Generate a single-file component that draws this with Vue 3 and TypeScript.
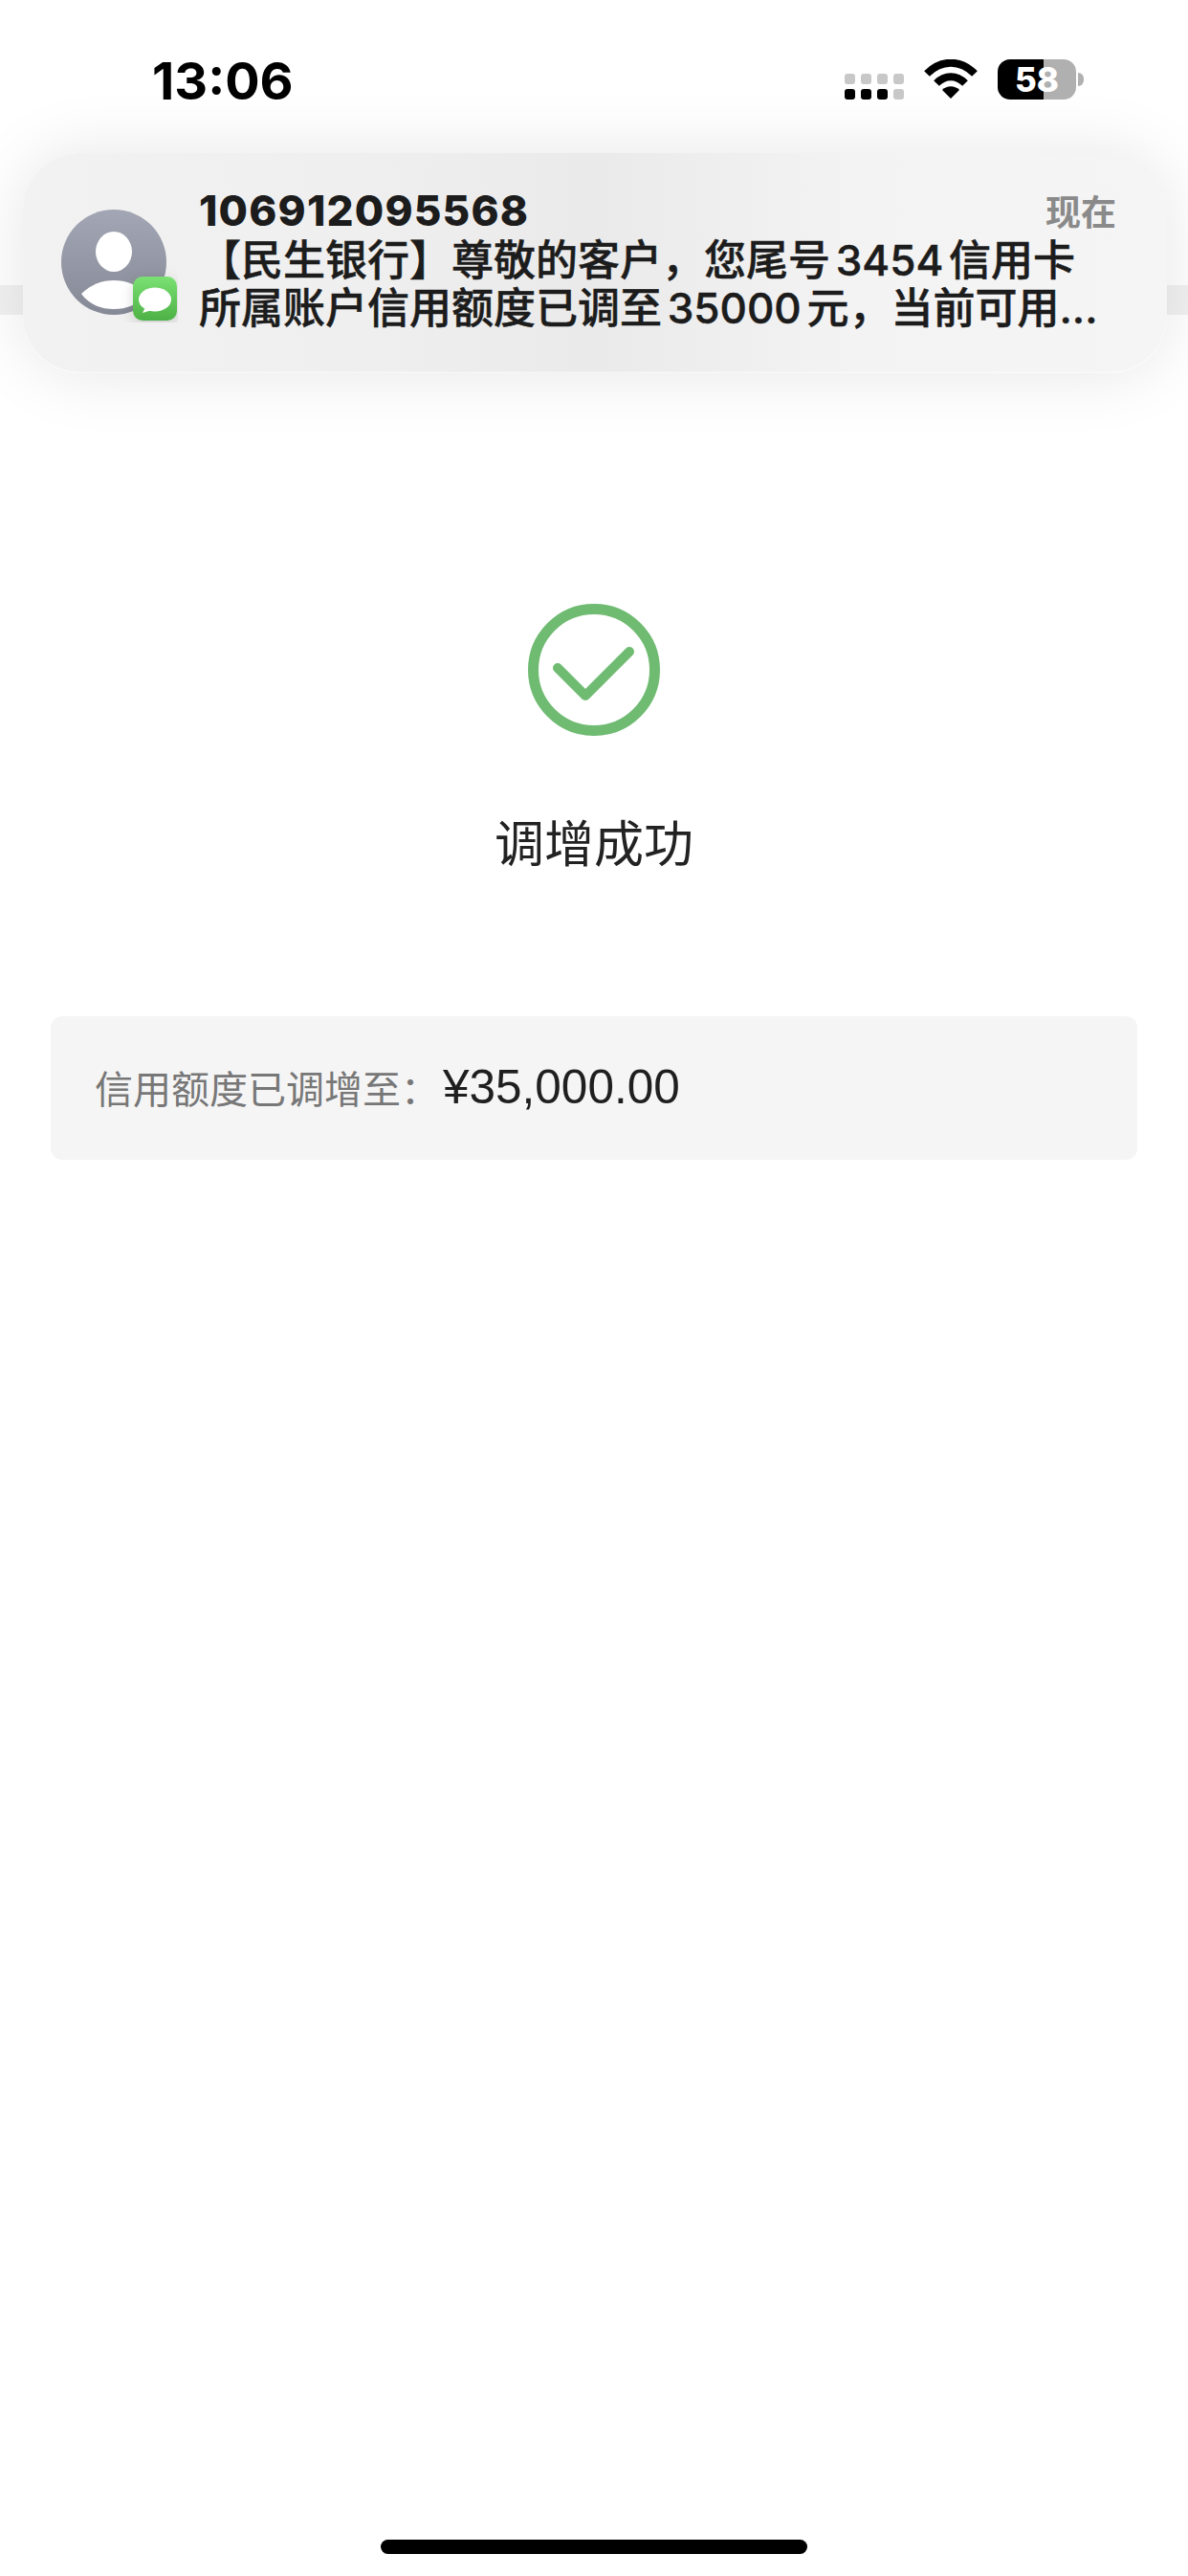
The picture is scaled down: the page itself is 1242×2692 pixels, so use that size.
<template>
  <div class="phone">
    <header class="status-bar">
      <span class="time">13:06</span>
      <div class="status-icons">
        <div class="signal">
          <i v-for="(on, i) in signalDots" :key="i" :class="{ on }"></i>
        </div>
        <svg class="wifi" width="56" height="41" viewBox="0 0 56 41">
          <path d="M3 15 C18 0 38 0 53 15" fill="none" stroke="#000" stroke-width="8" />
          <path d="M13 25 C22 16 34 16 43 25" fill="none" stroke="#000" stroke-width="8" />
          <path d="M19 32 C24 27 32 27 37 32 L28 41 Z" fill="#000" />
        </svg>
        <div class="battery">
          <div class="battery-body">
            <span>58</span>
          </div>
          <i class="battery-nub"></i>
        </div>
      </div>
    </header>

    <!-- page title bar, mostly hidden behind the notification -->
    <div class="nav-strip"></div>

    <main class="content">
      <svg class="check" width="138" height="138" viewBox="0 0 138 138">
        <circle cx="69" cy="69" r="63.5" fill="none" stroke="#6fbb72" stroke-width="11" />
        <path d="M31 67 L60 96 L106 50" fill="none" stroke="#6fbb72" stroke-width="10" stroke-linecap="round" stroke-linejoin="round" />
      </svg>
      <h1 class="result-title">调增成功</h1>
      <div class="limit-box">
        <span class="limit-label">信用额度已调增至：</span>
        <span class="limit-value">¥35,000.00</span>
      </div>
    </main>

    <section class="notification">
      <div class="avatar">
        <svg width="122" height="118" viewBox="0 0 122 118">
          <defs>
            <linearGradient id="avatarFill" x1="0" y1="0" x2="0" y2="1">
              <stop offset="0" stop-color="#a3a6b4" />
              <stop offset="1" stop-color="#868996" />
            </linearGradient>
            <linearGradient id="badgeFill" x1="0" y1="0" x2="0" y2="1">
              <stop offset="0" stop-color="#7be173" />
              <stop offset="1" stop-color="#4db146" />
            </linearGradient>
            <filter id="badgeShadow" x="-50%" y="-50%" width="200%" height="200%">
              <feDropShadow dx="0" dy="4" stdDeviation="7" flood-color="#000" flood-opacity="0.16" />
            </filter>
          </defs>
          <circle cx="55" cy="55" r="55" fill="url(#avatarFill)" />
          <ellipse cx="55" cy="44" rx="19" ry="21" fill="#fff" />
          <path d="M21 88 C32 78 42 74 55 74 C68 74 78 78 89 88 C80 100 68 104 55 104 C42 104 30 100 21 88 Z" fill="#fff" />
          <rect x="75" y="70" width="46" height="46" rx="10" fill="url(#badgeFill)" filter="url(#badgeShadow)" />
          <ellipse cx="98" cy="94" rx="17" ry="12.5" fill="#fff" />
          <path d="M88 102 L85 108 L95 105 Z" fill="#fff" />
        </svg>
      </div>
      <div class="note-text">
        <div class="note-head">
          <span class="note-sender">106912095568</span>
          <span class="note-when">现在</span>
        </div>
        <div class="note-line first">【民生银行】尊敬的客户，您尾号 3454 信用卡</div>
        <div class="note-line">所属账户信用额度已调至 35000 元，当前可用...</div>
      </div>
    </section>

    <div class="home-indicator"></div>
  </div>
</template>

<script setup lang="ts">
// bottom row of the signal dots has three lit, top row is all dim
const signalDots: boolean[] = [false, false, false, false, true, true, true, false];
</script>

<style scoped>
.phone {
  position: relative;
  display: flex;
  flex-direction: column;
  width: 1242px;
  height: 2692px;
  overflow: hidden;
  background: #fff;
  font-family: Inter, "Noto Sans CJK SC", sans-serif;
}

.status-bar {
  display: flex;
  justify-content: space-between;
  height: 130px;
  padding: 0 109px 0 159px;
  box-sizing: border-box;
  position: relative;
  z-index: 2;
}

.time {
  margin-top: 54px;
  font-size: 54px;
  line-height: 62px;
  font-weight: 700;
  color: #000;
}

.status-icons {
  display: flex;
  align-items: flex-start;
  padding-top: 62px;
}

.signal {
  display: grid;
  grid-template-columns: repeat(4, 11px);
  grid-auto-rows: 11px;
  gap: 5px 6px;
  margin-top: 15px;
  margin-right: 21px;
}

.signal i {
  border-radius: 3px;
  background: #c8c8c8;
}

.signal i.on {
  background: #000;
}

.wifi {
  margin-right: 21px;
}

.battery {
  display: flex;
  align-items: center;
  gap: 2px;
}

.battery-body {
  width: 82px;
  height: 42px;
  border-radius: 13px;
  background: linear-gradient(90deg, #000 48px, #b0b0b0 48px);
  display: flex;
  align-items: center;
  justify-content: center;
}

.battery-body span {
  font-size: 35px;
  line-height: 42px;
  font-weight: 800;
  color: #fff;
}

.battery-nub {
  width: 6px;
  height: 14px;
  border-radius: 0 7px 7px 0;
  background: #b0b0b0;
}

.nav-strip {
  height: 31px;
  margin-top: 168px;
  background: #f1f1f1;
}

.content {
  display: flex;
  flex-direction: column;
  align-items: center;
  padding: 302px 53px 0;
}

.result-title {
  margin: 84px 0 0;
  font-size: 52px;
  line-height: 60px;
  font-weight: 400;
  color: #222;
}

.limit-box {
  display: flex;
  align-items: center;
  align-self: stretch;
  height: 150px;
  margin-top: 149px;
  padding: 0 0 3px 46px;
  box-sizing: border-box;
  border-radius: 12px;
  background: #f5f5f5;
}

.limit-label {
  font-size: 40px;
  color: #777;
}

.limit-value {
  margin-left: 4px;
  font-family: "Liberation Sans", sans-serif;
  font-size: 49.5px;
  color: #1f1f1f;
}

.notification {
  position: absolute;
  left: 24px;
  top: 160px;
  z-index: 1;
  display: flex;
  width: 1196px;
  height: 230px;
  padding: 59px 53px 0 40px;
  box-sizing: border-box;
  gap: 34px;
  border-radius: 60px;
  background: linear-gradient(90deg, #f2f2f2 0%, #efefef 30%, #eaeaea 50%, #f3f3f3 72%, #f5f5f5 100%);
  box-shadow: inset 0 -1.5px 0 rgba(255, 255, 255, 0.5), 0 0 70px rgba(0, 0, 0, 0.1);
}

.avatar {
  flex: none;
  width: 110px;
  height: 118px;
}

.note-text {
  flex: 1;
  margin-top: -26px;
  min-width: 0;
  color: #1c1c1c;
}

.note-head {
  display: flex;
  justify-content: space-between;
  align-items: center;
  height: 54px;
}

.note-sender {
  font-size: 44px;
  font-weight: 800;
  letter-spacing: 1.2px;
}

.note-when {
  font-size: 37px;
  font-weight: 700;
  color: #8a8a8a;
}

.note-line {
  font-size: 44px;
  line-height: 50px;
  font-weight: 500;
  word-spacing: -6px;
  white-space: nowrap;
  -webkit-text-stroke: 0.5px #1c1c1c;
}

.home-indicator {
  position: absolute;
  left: 398px;
  bottom: 23px;
  width: 446px;
  height: 15px;
  border-radius: 8px;
  background: #000;
}
</style>

<style>
html,
body {
  margin: 0;
  background: #fff;
}
</style>
